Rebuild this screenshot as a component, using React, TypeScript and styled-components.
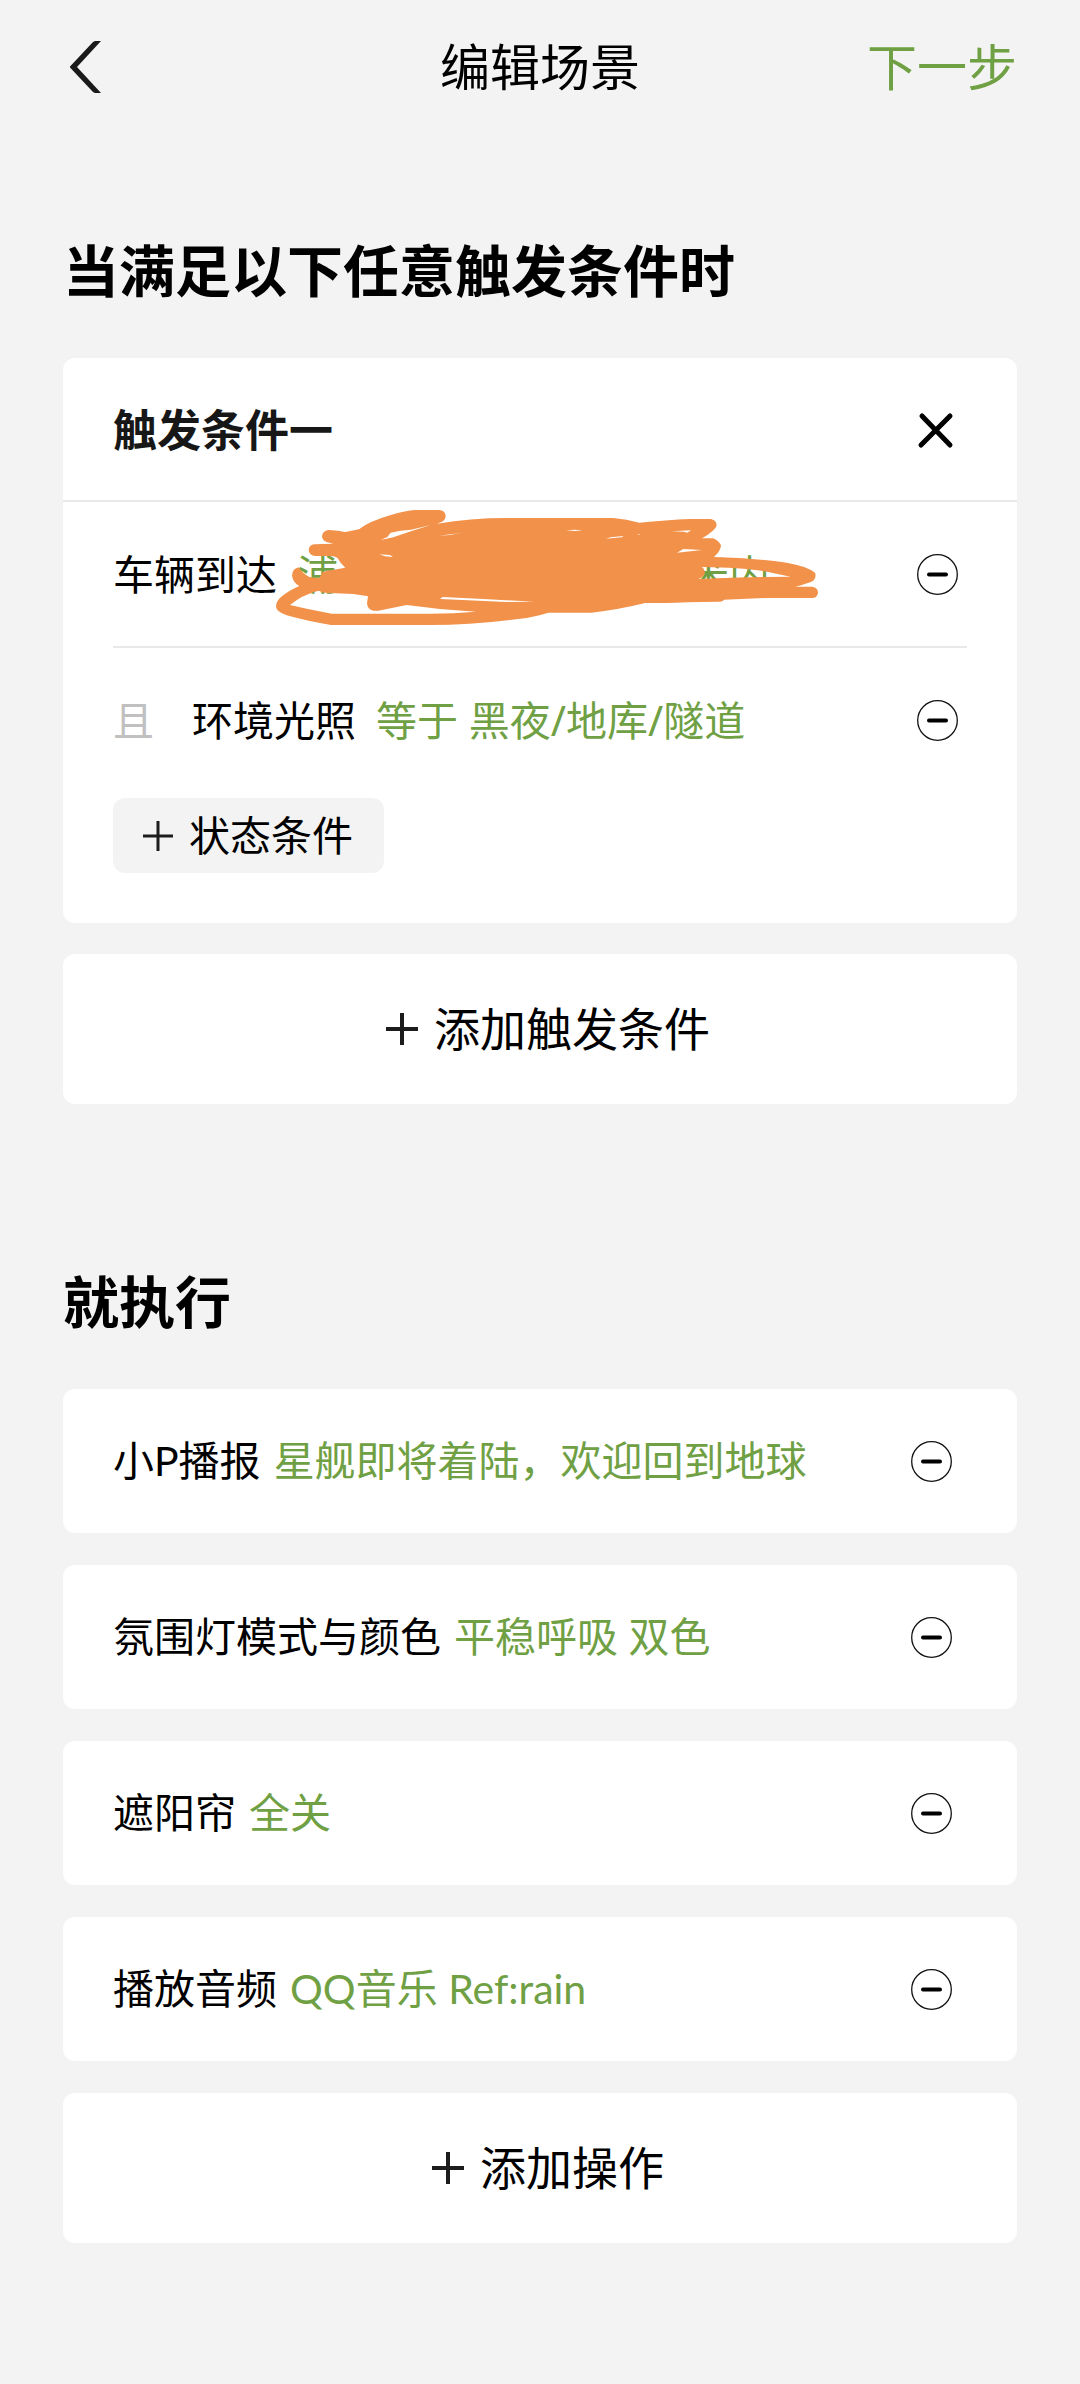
import React from 'react';
import styled, { createGlobalStyle } from 'styled-components';

const GREEN = '#70a044';
const PAGE = '#f3f3f3';
const TEXT_FONT = '"Noto Sans", "Noto Sans CJK SC", sans-serif';
const ACTION_FONT = 'Lato, "Noto Sans CJK SC", sans-serif';

const GlobalStyle = createGlobalStyle`
  *, *::before, *::after { box-sizing: border-box; }
  body {
    margin: 0;
    background: ${PAGE};
    color: #000;
    font-family: ${TEXT_FONT};
    font-size: 41px;
    line-height: 60px;
  }
  h1, h2, h3, ul, p { margin: 0; padding: 0; }
  ul { list-style: none; }
  button {
    margin: 0;
    padding: 0;
    border: 0;
    background: none;
    color: inherit;
    font: inherit;
    cursor: pointer;
  }
  svg { display: block; }
`;

const Page = styled.main`
  min-height: 100vh;
  background: ${PAGE};
`;

const TopBar = styled.header`
  display: grid;
  grid-template-columns: 1fr auto 1fr;
  align-items: center;
  height: 134px;
  padding: 0 63px;
  font-size: 50px;
`;

const BackButton = styled.button`
  justify-self: start;
`;

const NextButton = styled.button`
  justify-self: end;
  color: ${GREEN};
`;

const PageTitle = styled.h1`
  font-size: 50px;
  font-weight: 400;
`;

const Section = styled.section`
  padding: 96px 63px 61px;
`;

const SectionTitle = styled.h2`
  margin-bottom: 48px;
  font-size: 56px;
  font-weight: 700;
  line-height: 80px;
`;

const Stack = styled.div<{ $gap: number }>`
  display: flex;
  flex-direction: column;
  gap: ${({ $gap }) => $gap}px;
`;

const ActionList = styled.ul`
  display: flex;
  flex-direction: column;
  gap: 32px;
`;

const Card = styled.article`
  border-radius: 12px;
  background: #fff;
`;

const CardHeader = styled.div`
  display: flex;
  align-items: center;
  justify-content: space-between;
  height: 144px;
  padding: 2px 50px 0;
  border-bottom: 2px solid #e8e8e8;
`;

const CardTitle = styled.h3`
  color: #171717;
  font-size: 44px;
  font-weight: 700;
`;

const CardBody = styled.div`
  padding: 0 50px 50px;
`;

const ConditionRow = styled.li<{ $divided?: boolean }>`
  position: relative;
  display: flex;
  align-items: center;
  gap: 20px;
  min-height: ${({ $divided }) => ($divided ? 146 : 144)}px;
  border-bottom: ${({ $divided }) => ($divided ? '2px solid #e8e8e8' : '0')};
`;

const ActionRow = styled.li`
  display: flex;
  align-items: center;
  gap: 13px;
  min-height: 144px;
  padding: 0 56px 0 50px;
  border-radius: 12px;
  background: #fff;
  font-family: ${ACTION_FONT};
`;

const Joiner = styled.span`
  margin-right: 18px;
  color: #c0c0c0;
`;

const Label = styled.span`
  flex: none;
`;

const Value = styled.span`
  flex: 1;
  color: ${GREEN};
`;

const MaskedValue = styled(Value)`
  display: flex;
  gap: 350px;
`;

const Scribble = styled.svg`
  position: absolute;
  top: 5px;
  left: 160px;
  pointer-events: none;
`;

const IconButton = styled.button`
  display: flex;
  flex: none;
  align-items: center;
  justify-content: center;
  width: 60px;
  height: 60px;
`;

const StateButton = styled.button`
  display: flex;
  align-items: center;
  gap: 16px;
  height: 75px;
  margin-top: 6px;
  padding: 0 31px 0 30px;
  border-radius: 12px;
  background: ${PAGE};
  font-family: ${ACTION_FONT};
`;

const AddButton = styled.button`
  display: flex;
  align-items: center;
  justify-content: center;
  width: 100%;
  height: 150px;
  border-radius: 12px;
  background: #fff;
  font-family: ${ACTION_FONT};
  font-size: 46px;
`;

const ActionAdd = styled.div`
  margin-top: 32px;
`;

const BackIcon = () => (
  <svg width="48" height="60" viewBox="0 0 48 60" aria-hidden="true">
    <path d="M32 4H38L14 30L38 56H32L30 55L7 30.5V29.5L30 5Z" fill="#1a1a1a" />
  </svg>
);

const CloseIcon = () => (
  <svg width="40" height="40" viewBox="0 0 40 40" aria-hidden="true">
    <path d="M5 6L33 35M33 6L4 35" fill="none" stroke="#000" strokeWidth="5" strokeLinecap="round" />
  </svg>
);

const MinusIcon = () => (
  <svg width="41" height="41" viewBox="0 0 41 41" aria-hidden="true">
    <circle cx="20.5" cy="20.5" r="19.8" fill="none" stroke="#111" strokeWidth="1.3" />
    <path d="M12 20.5H29" stroke="#000" strokeWidth="4" strokeLinecap="round" />
  </svg>
);

const PlusIcon = ({ box, arm }: { box: number; arm: number }) => {
  const c = box / 2;
  return (
    <svg width={box} height={box} viewBox={`0 0 ${box} ${box}`} aria-hidden="true">
      <path
        d={`M${c - arm} ${c}H${c + arm}M${c} ${c - arm}V${c + arm}`}
        stroke="#1c1c1c"
        strokeWidth={arm > 15 ? 4 : 3}
      />
    </svg>
  );
};

const MarkerScribble = () => (
  <Scribble width="547" height="121" viewBox="699 501 1641 363" aria-hidden="true">
    <path
      fill="#f29149"
      fillRule="evenodd"
      d="M868 570L900 573Q915 577 920 575L957 568Q985 545 1050 526Q1100 511 1125 510H1199Q1217 512 1217 530Q1215 544 1196 549L1192 551Q1290 534 1400 534H1720Q1760 538 1798 548Q1880 540 1950 537H2013Q2030 541 2030 557Q2025 572 1986 595H2019Q2040 604 2043 618Q2040 635 2022 651Q2130 653 2240 668Q2300 678 2325 698Q2330 712 2320 722Q2305 730 2265 740H2317Q2334 743 2334 758Q2332 774 2315 774H2180L2052 779Q2048 785 2035 785Q1930 786 1880 789H1815Q1740 808 1655 818H1525Q1480 832 1440 836Q1300 855 1170 855H873Q800 843 740 826Q708 814 708 800Q708 785 722 772Q745 752 778 738Q757 727 756 705Q758 686 776 682Q786 699 808 711L838 715L848 696Q870 690 916 683Q902 672 893 655Q885 648 868 648H824Q807 645 806 630Q808 614 823 613L880 611L860 606Q846 600 846 588Q848 571 868 570Z
      M750 795Q785 765 835 752Q850 760 870 759L940 762L984 769L981 790Q982 809 1000 812H1015L1100 795L1200 807L1308 815Q1240 821 1170 821H875L800 806Z
      M1022 600L1042 591L1052 578L1082 572L1113 569L1172 555L1115 573L1060 592Z
      M1195 587L1240 582L1274 576L1230 585Z
      M1018 643L1050 645L1059 651L1035 649Z
      M1200 777L1208 771L1345 778L1483 785L1400 786Z
      M1578 571L1603 569L1628 571L1605 573Z
      M1698 596L1712 592L1751 588L1745 592Z
      M1792 584L1799 582L1798 585Z
      M1895 574L1953 571L1942 578L1932 575Z
      M1911 638L1930 627L1986 630Z
      M1986 681Q2100 683 2170 693L2252 710Q2100 711 2050 714L1975 717Q1994 710 1995 697Q1993 686 1986 681Z"
    />
  </Scribble>
);

const RemoveButton = ({ name }: { name: string }) => (
  <IconButton type="button" aria-label={`删除 ${name}`}>
    <MinusIcon />
  </IconButton>
);

const actions = [
  { label: '小P播报', value: '星舰即将着陆，欢迎回到地球' },
  { label: '氛围灯模式与颜色', value: '平稳呼吸 双色' },
  { label: '遮阳帘', value: '全关' },
  { label: '播放音频', value: 'QQ音乐 Ref:rain' },
];

export default function App() {
  return (
    <>
      <GlobalStyle />
      <Page lang="zh-CN">
        <TopBar>
          <BackButton type="button" aria-label="返回">
            <BackIcon />
          </BackButton>
          <PageTitle>编辑场景</PageTitle>
          <NextButton type="button">下一步</NextButton>
        </TopBar>

        <Section>
          <SectionTitle>当满足以下任意触发条件时</SectionTitle>
          <Stack $gap={31}>
            <Card>
              <CardHeader>
                <CardTitle>触发条件一</CardTitle>
                <IconButton type="button" aria-label="关闭">
                  <CloseIcon />
                </IconButton>
              </CardHeader>
              <CardBody>
                <ul>
                  <ConditionRow $divided>
                    <Label>车辆到达</Label>
                    <MaskedValue>
                      <span>浦</span>
                      <span>米内</span>
                    </MaskedValue>
                    <RemoveButton name="车辆到达" />
                    <MarkerScribble />
                  </ConditionRow>
                  <ConditionRow>
                    <Joiner>且</Joiner>
                    <Label>环境光照</Label>
                    <Value>等于 黑夜/地库/隧道</Value>
                    <RemoveButton name="环境光照" />
                  </ConditionRow>
                </ul>
                <StateButton type="button">
                  <PlusIcon box={30} arm={15} />
                  状态条件
                </StateButton>
              </CardBody>
            </Card>
            <AddButton type="button">
              <PlusIcon box={64} arm={16} />
              添加触发条件
            </AddButton>
          </Stack>
        </Section>

        <Section>
          <SectionTitle>就执行</SectionTitle>
          <ActionList>
            {actions.map(({ label, value }) => (
              <ActionRow key={label}>
                <Label>{label}</Label>
                <Value>{value}</Value>
                <RemoveButton name={label} />
              </ActionRow>
            ))}
          </ActionList>
          <ActionAdd>
            <AddButton type="button">
              <PlusIcon box={64} arm={16} />
              添加操作
            </AddButton>
          </ActionAdd>
        </Section>
      </Page>
    </>
  );
}
